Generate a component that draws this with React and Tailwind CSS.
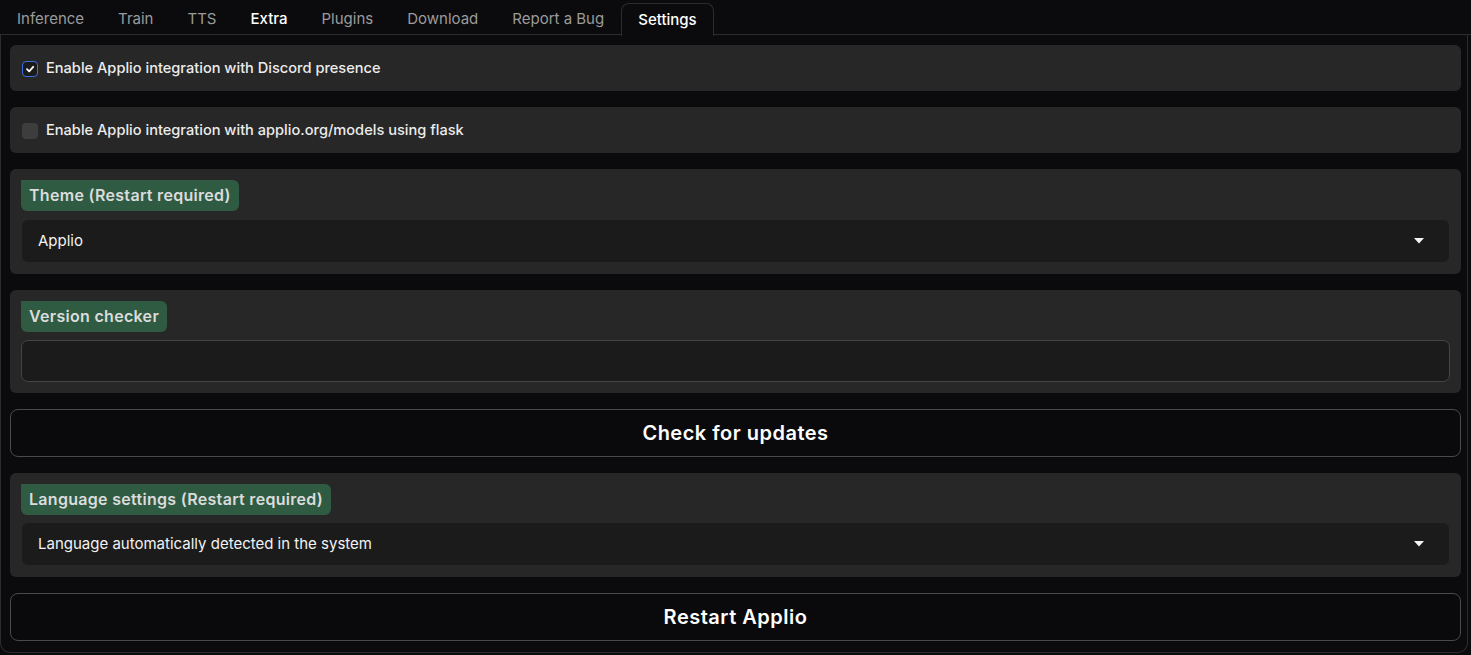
const tabs = ["Inference", "Train", "TTS", "Extra", "Plugins", "Download", "Report a Bug", "Settings"];

function Caret() {
  return (
    <svg width="10" height="6" viewBox="0 0 10 6" className="shrink-0">
      <path d="M0 0 L10 0 L5 5.5 Z" fill="#f5f5f5" />
    </svg>
  );
}

function Checkbox({ checked }) {
  return checked ? (
    <span className="w-[16px] h-[16px] rounded-[4px] border-[1.5px] border-[#3b6fe0] bg-[#1b1b1b] flex items-center justify-center shrink-0">
      <svg width="10" height="10" viewBox="0 0 10 10">
        <path d="M2 5.2 L4.2 7.3 L8.2 2.8" fill="none" stroke="#ffffff" strokeWidth="1.8" strokeLinecap="round" strokeLinejoin="round" />
      </svg>
    </span>
  ) : (
    <span className="w-[16px] h-[16px] rounded-[4px] bg-[#3d3d3d] shrink-0" />
  );
}

function Badge({ children }) {
  return (
    <div className="self-start bg-[#2f5b43] text-[#dcdcdc] font-semibold text-[16px] leading-[31px] h-[31px] px-[8px] rounded-tr-[6px] rounded-br-[6px] rounded-bl-[6px] tracking-[0.3px]">
      {children}
    </div>
  );
}

function Dropdown({ value }) {
  return (
    <div className="h-[42px] ml-px bg-[#1b1b1b] rounded-[6px] flex items-center justify-between pl-[16px] pr-[25px] text-[15px] text-[#f2f2f2]">
      <span>{value}</span>
      <Caret />
    </div>
  );
}

export default function App() {
  return (
    <div className="w-[1471px] h-[655px] bg-[#0b0b0d] overflow-hidden" style={{ fontFamily: "Inter, 'Noto Sans', sans-serif" }}>
      {/* Tabs */}
      <div className="flex h-[35px] items-end">
        {tabs.map((t) => {
          const active = t === "Settings";
          return (
            <div
              key={t}
              className={
                active
                  ? "h-[33px] pt-[1px] px-[16px] flex items-center text-[15px] text-white font-medium border border-b-0 border-[#2c2c2e] rounded-t-[8px] bg-[#0b0b0d] relative top-px"
                  : t === "Extra"
                  ? "h-[33px] pt-[3px] px-[17px] flex items-center text-[15px] text-white font-medium border-b border-[#2c2c2e]"
                  : "h-[33px] pt-[3px] px-[17px] flex items-center text-[15px] text-[#9b9b9b] border-b border-[#2c2c2e]"
              }
            >
              {t}
            </div>
          );
        })}
        <div className="flex-1 h-[33px] border-b border-[#2c2c2e]" />
      </div>

      {/* Panel */}
      <div className="h-[618px] border-x border-b border-[#2c2c2e] rounded-b-[10px] mr-[3px] pl-[9px] pr-[6px] pt-[10px] flex flex-col gap-[16px] text-[#ececec]">
        <div className="h-[46px] bg-[#272727] rounded-[6px] flex items-center gap-[8px] px-[12px] pt-px text-[14.6px] font-medium">
          <Checkbox checked />
          <span>Enable Applio integration with Discord presence</span>
        </div>

        <div className="h-[46px] bg-[#272727] rounded-[6px] flex items-center gap-[8px] px-[12px] pt-px text-[14.6px] font-medium">
          <Checkbox />
          <span>Enable Applio integration with applio.org/models using flask</span>
        </div>

        <div className="h-[105px] bg-[#272727] rounded-[6px] pl-[11px] pt-[11px] pr-[12px] flex flex-col gap-[9px]">
          <Badge>Theme (Restart required)</Badge>
          <Dropdown value="Applio" />
        </div>

        <div className="h-[103px] bg-[#272727] rounded-[6px] pl-[11px] pt-[11px] pr-[11px] flex flex-col gap-[8px]">
          <Badge>Version checker</Badge>
          <div className="h-[42px] bg-[#1b1b1b] border border-[#444444] rounded-[7px]" />
        </div>

        <button className="h-[48px] border border-[#4a4a4a] rounded-[8px] bg-[#0a0a0c] text-white text-[20px] tracking-[0.5px] font-semibold">
          Check for updates
        </button>

        <div className="h-[104px] bg-[#272727] rounded-[6px] pl-[11px] pt-[11px] pr-[12px] flex flex-col gap-[8px]">
          <Badge>Language settings (Restart required)</Badge>
          <Dropdown value="Language automatically detected in the system" />
        </div>

        <button className="h-[48px] border border-[#4a4a4a] rounded-[8px] bg-[#0a0a0c] text-white text-[20px] tracking-[0.5px] font-semibold">
          Restart Applio
        </button>
      </div>
    </div>
  );
}
